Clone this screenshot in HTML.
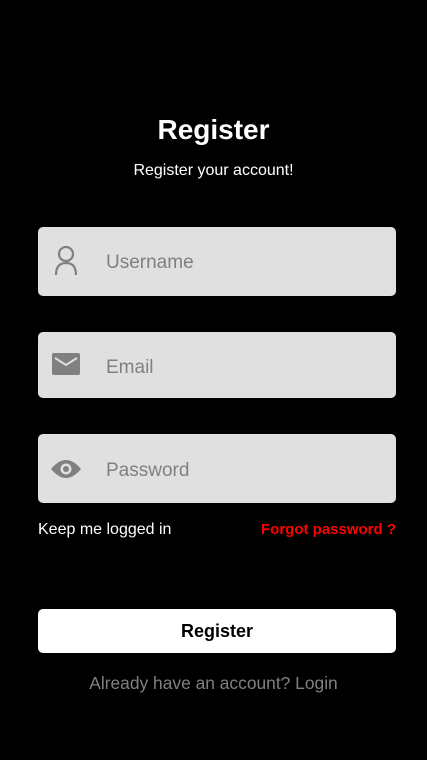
<!DOCTYPE html>
<html><head><style>
body{margin:0;background:#000;width:427px;height:760px;font-family:"Liberation Sans",sans-serif;position:relative;overflow:hidden}
.a{position:absolute}
.t{left:0;width:427px;text-align:center;color:#fff}
.in{left:38px;width:358px;background:#e0e0e0;border-radius:5px}
.in span{position:absolute;left:68px;color:#808080;font-size:19px}
.in svg{position:absolute;left:14px}
</style></head><body>
<div class="a t" style="top:114px;font-size:28px;font-weight:bold">Register</div>
<div class="a t" style="top:162px;font-size:16px">Register your account!</div>
<div class="a in" style="top:227px;height:69px"><svg width="28" height="32" style="top:18px" viewBox="0 0 28 32"><circle cx="14" cy="9" r="7" fill="none" stroke="#808080" stroke-width="2.2"/><path d="M4 30 Q4 18 14 18 Q24 18 24 30" fill="none" stroke="#808080" stroke-width="2.2"/></svg><span style="top:25px">Username</span></div>
<div class="a in" style="top:332px;height:66px"><svg width="28" height="22" style="top:21px;left:14px" viewBox="0 0 28 22"><rect x="0" y="0" width="28" height="22" rx="2" fill="#808080"/><path d="M3 5 L14 12 L25 5" fill="none" stroke="#e0e0e0" stroke-width="2"/></svg><span style="top:25px">Email</span></div>
<div class="a in" style="top:434px;height:69px"><svg width="30" height="20" style="top:25px;left:13px" viewBox="0 0 30 20"><path d="M0 10 Q15 -8 30 10 Q15 28 0 10Z" fill="#808080"/><circle cx="15" cy="10" r="5.5" fill="#e0e0e0"/><circle cx="15" cy="10" r="3" fill="#808080"/></svg><span style="top:26px">Password</span></div>
<div class="a" style="left:38px;top:521px;color:#fff;font-size:16px">Keep me logged in</div>
<div class="a" style="right:31px;top:521px;color:#f00;font-size:15px;font-weight:bold">Forgot password ?</div>
<div class="a" style="left:38px;top:609px;width:358px;height:44px;background:#fff;border-radius:5px;text-align:center;line-height:45px;font-size:18px;font-weight:bold">Register</div>
<div class="a t" style="top:673px;font-size:17.4px;color:#808080">Already have an account? Login</div>
</body></html>
